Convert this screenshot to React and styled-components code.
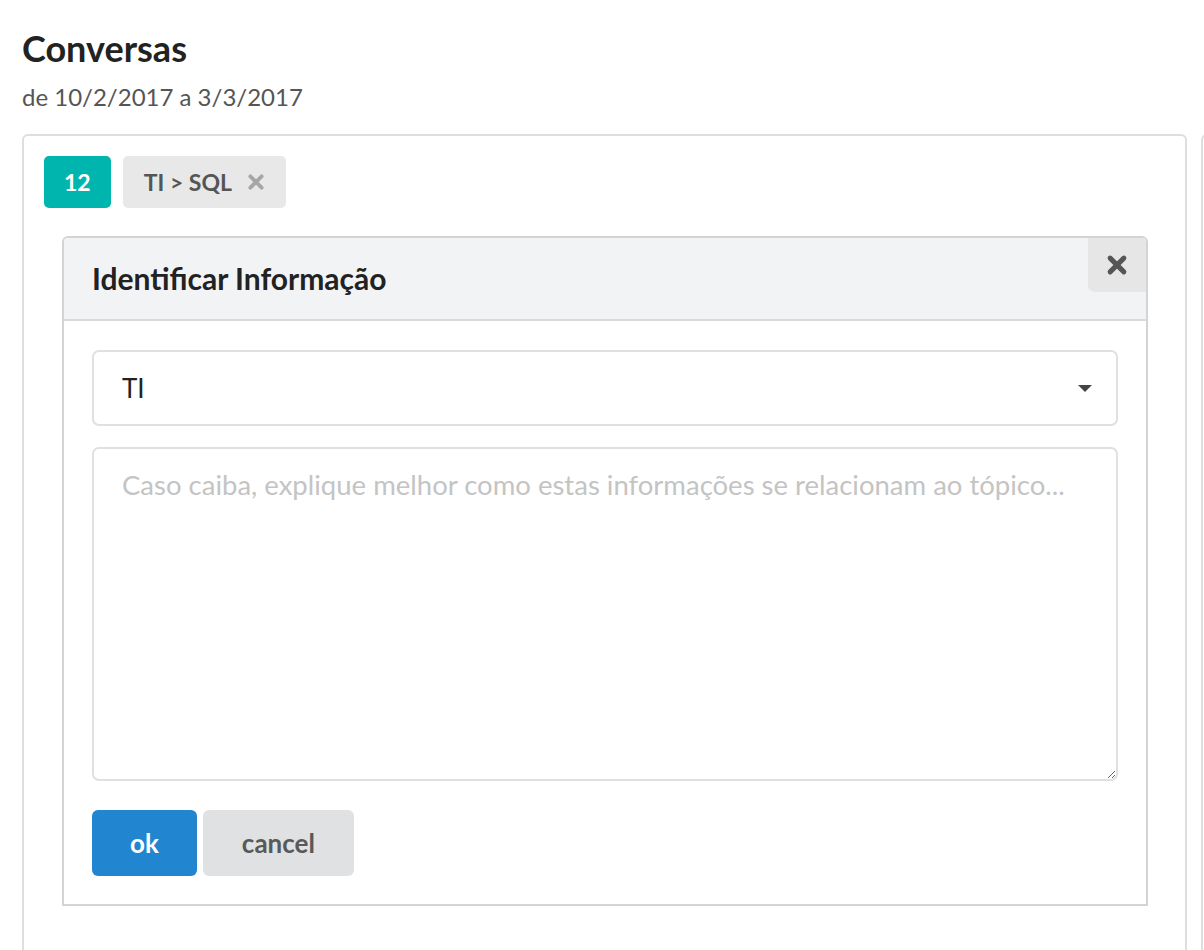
import React from 'react';
import styled, { createGlobalStyle } from 'styled-components';

const GlobalStyle = createGlobalStyle`
  html, body {
    margin: 0;
    padding: 0;
    background: #ffffff;
    font-family: Lato, 'Open Sans', 'Liberation Sans', sans-serif;
    color: #222;
  }
`;

const Page = styled.div`
  width: 1204px;
  height: 950px;
  overflow: hidden;
  box-sizing: border-box;
  padding: 26px 0 0 22px;
`;

const Title = styled.h1`
  margin: 0;
  font-size: 36px;
  font-weight: 700;
  line-height: 44px;
  color: #222;
`;

const Period = styled.div`
  margin-top: 13px;
  font-size: 24px;
  line-height: 28px;
  color: #555;
`;

const Cards = styled.div`
  display: flex;
  gap: 14px;
  margin-top: 23px;
`;

const Card = styled.div`
  flex: 0 0 ${(p) => p.width}px;
  box-sizing: border-box;
  height: 860px;
  border: 2px solid #dedede;
  border-radius: 6px;
  padding: 20px 37px 0 20px;
  background: #fff;
`;

const TagRow = styled.div`
  display: flex;
  gap: 12px;
`;

const Badge = styled.div`
  display: flex;
  align-items: center;
  justify-content: center;
  height: 52px;
  padding: 0 ${(p) => p.pad}px;
  border-radius: 5px;
  background: ${(p) => p.bg};
  color: ${(p) => p.fg};
  font-size: 23px;
  font-weight: 700;
`;

const RemoveIcon = styled.span`
  margin-left: 15px;
  display: inline-flex;
`;

const Dialog = styled.div`
  margin: 28px 0 0 18px;
  border: 2px solid #d4d4d5;
  border-radius: 6px 6px 0 0;
  overflow: hidden;
`;

const DialogHeader = styled.div`
  display: flex;
  align-items: flex-start;
  justify-content: space-between;
  height: 81px;
  background: #f2f3f5;
  border-bottom: 2px solid #d9d9d9;
`;

const DialogTitle = styled.h2`
  margin: 0;
  padding: 22px 0 0 28px;
  font-size: 30px;
  line-height: 36px;
  font-weight: 700;
  color: #222;
`;

const CloseButton = styled.button`
  width: 58px;
  height: 54px;
  border: none;
  border-bottom-left-radius: 7px;
  background: #e6e6e6;
  display: flex;
  align-items: center;
  justify-content: center;
  padding: 0;
  cursor: pointer;
`;

const DialogBody = styled.div`
  padding: 29px 28px 28px 28px;
  background: #fff;
`;

const Select = styled.div`
  display: flex;
  align-items: center;
  justify-content: space-between;
  box-sizing: border-box;
  height: 76px;
  border: 2px solid #e0e0e0;
  border-radius: 7px;
  padding: 0 24px 0 28px;
  font-size: 26px;
  color: #222;
`;

const Caret = styled.span`
  width: 0;
  height: 0;
  border-left: 7px solid transparent;
  border-right: 7px solid transparent;
  border-top: 7px solid #444;
`;

const TextArea = styled.textarea`
  display: block;
  box-sizing: border-box;
  width: 100%;
  height: 334px;
  margin-top: 21px;
  border: 2px solid #e0e0e0;
  border-radius: 7px;
  padding: 20px 28px;
  font-family: Lato, 'Open Sans', 'Liberation Sans', sans-serif;
  font-size: 27.5px;
  line-height: 32px;
  color: #222;
  resize: vertical;
  outline: none;
  &::placeholder {
    color: #c4c4c4;
  }
`;

const Actions = styled.div`
  display: flex;
  gap: 6px;
  margin-top: 29px;
`;

const Button = styled.button`
  height: 66px;
  padding: 0 ${(p) => p.pad}px;
  border: none;
  border-radius: 6px;
  background: ${(p) => (p.primary ? '#2185d0' : '#e0e1e2')};
  color: ${(p) => (p.primary ? '#fff' : '#595959')};
  font-family: Lato, 'Open Sans', 'Liberation Sans', sans-serif;
  font-size: 26px;
  font-weight: 700;
  cursor: pointer;
`;

const Cross = ({ size, color, weight }) => (
  <svg width={size} height={size} viewBox="0 0 16 16">
    <path d="M3 3 L13 13 M13 3 L3 13" stroke={color} strokeWidth={weight} strokeLinecap="round" />
  </svg>
);

export default function App() {
  return (
    <Page>
      <GlobalStyle />
      <Title>Conversas</Title>
      <Period>de 10/2/2017 a 3/3/2017</Period>
      <Cards>
        <Card width={1165}>
          <TagRow>
            <Badge bg="#00b5ad" fg="#fff" pad={20}>12</Badge>
            <Badge bg="#e8e8e8" fg="#555" pad={21}>
              TI &gt; SQL
              <RemoveIcon>
                <Cross size={18} color="#a6a6a6" weight={3.4} />
              </RemoveIcon>
            </Badge>
          </TagRow>

          <Dialog>
            <DialogHeader>
              <DialogTitle>Identificar Informação</DialogTitle>
              <CloseButton aria-label="fechar">
                <Cross size={22} color="#555" weight={3.6} />
              </CloseButton>
            </DialogHeader>
            <DialogBody>
              <Select>
                <span>TI</span>
                <Caret />
              </Select>
              <TextArea placeholder="Caso caiba, explique melhor como estas informações se relacionam ao tópico..." />
              <Actions>
                <Button primary pad={38}>ok</Button>
                <Button pad={39}>cancel</Button>
              </Actions>
            </DialogBody>
          </Dialog>
        </Card>
        <Card width={200} />
      </Cards>
    </Page>
  );
}
